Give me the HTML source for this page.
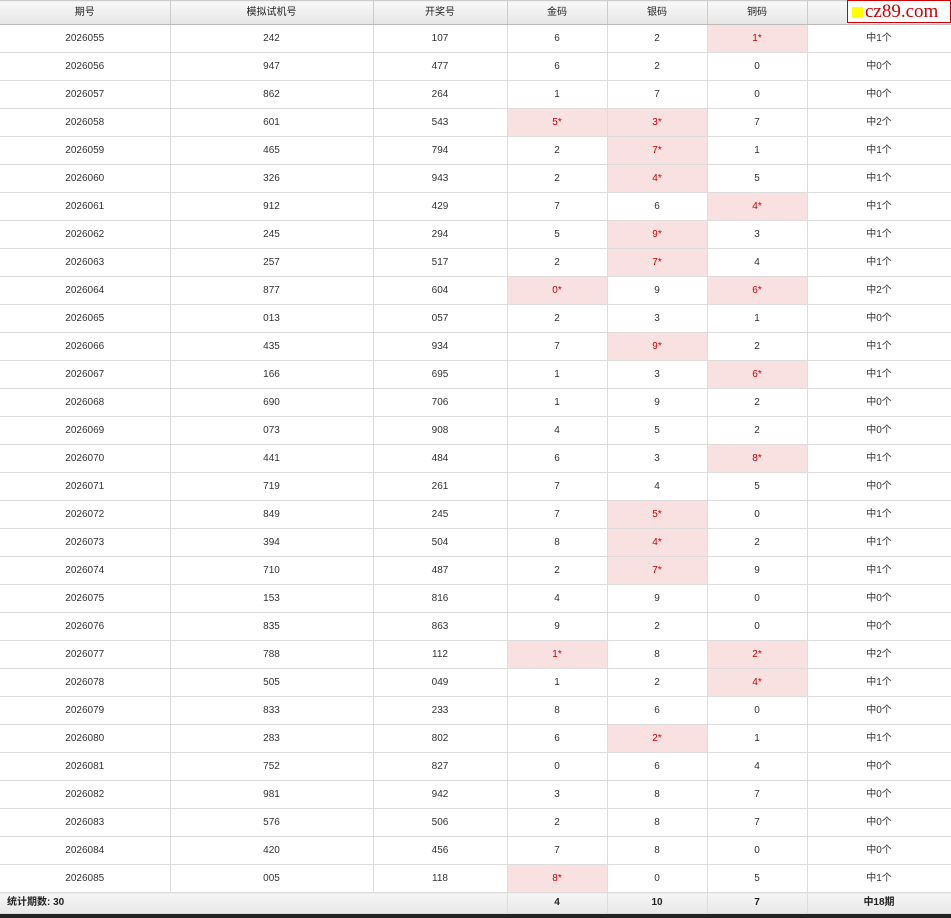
<!DOCTYPE html><html><head><meta charset="utf-8"><style>
body{margin:0;width:951px;height:918px;background:#fff;font-family:"Liberation Sans","Noto Sans CJK SC",sans-serif;font-size:10px;color:#333;position:relative;overflow:hidden}
table{border-collapse:collapse;table-layout:fixed;width:951px;position:absolute;left:0;top:0}
td{border:1px solid #ddd;text-align:center;height:27px;padding:0;line-height:12px;vertical-align:middle}
tr.h td{height:23px;background:linear-gradient(#f8f8f8,#e6e6e6);border-color:#ccc;border-bottom:1px solid #bbb;color:#222}
td.r{background:#f9e1e2;color:#c00}
tr.f td{height:20px;background:linear-gradient(#f5f5f5,#e8e8e8);font-weight:bold;color:#222}
td:first-child{border-left:none}
.bar{position:absolute;left:0;top:914px;width:951px;height:4px;background:#222}
.logo{position:absolute;left:847px;top:0;width:102px;height:21px;border:1px solid #c00;background:#fff;color:#c00;font-family:"Liberation Serif",serif;font-size:19px;line-height:21px}
.logo i{display:inline-block;width:11px;height:11px;background:#ff0;margin:0 2px 0 4px;vertical-align:-1px}
</style></head><body>
<table>
<colgroup><col style="width:170px"><col style="width:203px"><col style="width:134px"><col style="width:100px"><col style="width:100px"><col style="width:100px"><col style="width:144px"></colgroup>
<tr class="h"><td>期号</td><td>模拟试机号</td><td>开奖号</td><td>金码</td><td>银码</td><td>铜码</td><td>结果</td></tr>
<tr><td>2026055</td><td>242</td><td>107</td><td>6</td><td>2</td><td class="r">1*</td><td>中1个</td></tr>
<tr><td>2026056</td><td>947</td><td>477</td><td>6</td><td>2</td><td>0</td><td>中0个</td></tr>
<tr><td>2026057</td><td>862</td><td>264</td><td>1</td><td>7</td><td>0</td><td>中0个</td></tr>
<tr><td>2026058</td><td>601</td><td>543</td><td class="r">5*</td><td class="r">3*</td><td>7</td><td>中2个</td></tr>
<tr><td>2026059</td><td>465</td><td>794</td><td>2</td><td class="r">7*</td><td>1</td><td>中1个</td></tr>
<tr><td>2026060</td><td>326</td><td>943</td><td>2</td><td class="r">4*</td><td>5</td><td>中1个</td></tr>
<tr><td>2026061</td><td>912</td><td>429</td><td>7</td><td>6</td><td class="r">4*</td><td>中1个</td></tr>
<tr><td>2026062</td><td>245</td><td>294</td><td>5</td><td class="r">9*</td><td>3</td><td>中1个</td></tr>
<tr><td>2026063</td><td>257</td><td>517</td><td>2</td><td class="r">7*</td><td>4</td><td>中1个</td></tr>
<tr><td>2026064</td><td>877</td><td>604</td><td class="r">0*</td><td>9</td><td class="r">6*</td><td>中2个</td></tr>
<tr><td>2026065</td><td>013</td><td>057</td><td>2</td><td>3</td><td>1</td><td>中0个</td></tr>
<tr><td>2026066</td><td>435</td><td>934</td><td>7</td><td class="r">9*</td><td>2</td><td>中1个</td></tr>
<tr><td>2026067</td><td>166</td><td>695</td><td>1</td><td>3</td><td class="r">6*</td><td>中1个</td></tr>
<tr><td>2026068</td><td>690</td><td>706</td><td>1</td><td>9</td><td>2</td><td>中0个</td></tr>
<tr><td>2026069</td><td>073</td><td>908</td><td>4</td><td>5</td><td>2</td><td>中0个</td></tr>
<tr><td>2026070</td><td>441</td><td>484</td><td>6</td><td>3</td><td class="r">8*</td><td>中1个</td></tr>
<tr><td>2026071</td><td>719</td><td>261</td><td>7</td><td>4</td><td>5</td><td>中0个</td></tr>
<tr><td>2026072</td><td>849</td><td>245</td><td>7</td><td class="r">5*</td><td>0</td><td>中1个</td></tr>
<tr><td>2026073</td><td>394</td><td>504</td><td>8</td><td class="r">4*</td><td>2</td><td>中1个</td></tr>
<tr><td>2026074</td><td>710</td><td>487</td><td>2</td><td class="r">7*</td><td>9</td><td>中1个</td></tr>
<tr><td>2026075</td><td>153</td><td>816</td><td>4</td><td>9</td><td>0</td><td>中0个</td></tr>
<tr><td>2026076</td><td>835</td><td>863</td><td>9</td><td>2</td><td>0</td><td>中0个</td></tr>
<tr><td>2026077</td><td>788</td><td>112</td><td class="r">1*</td><td>8</td><td class="r">2*</td><td>中2个</td></tr>
<tr><td>2026078</td><td>505</td><td>049</td><td>1</td><td>2</td><td class="r">4*</td><td>中1个</td></tr>
<tr><td>2026079</td><td>833</td><td>233</td><td>8</td><td>6</td><td>0</td><td>中0个</td></tr>
<tr><td>2026080</td><td>283</td><td>802</td><td>6</td><td class="r">2*</td><td>1</td><td>中1个</td></tr>
<tr><td>2026081</td><td>752</td><td>827</td><td>0</td><td>6</td><td>4</td><td>中0个</td></tr>
<tr><td>2026082</td><td>981</td><td>942</td><td>3</td><td>8</td><td>7</td><td>中0个</td></tr>
<tr><td>2026083</td><td>576</td><td>506</td><td>2</td><td>8</td><td>7</td><td>中0个</td></tr>
<tr><td>2026084</td><td>420</td><td>456</td><td>7</td><td>8</td><td>0</td><td>中0个</td></tr>
<tr><td>2026085</td><td>005</td><td>118</td><td class="r">8*</td><td>0</td><td>5</td><td>中1个</td></tr>
<tr class="f"><td colspan="3" style="text-align:left;padding-left:7px">统计期数: 30</td><td>4</td><td>10</td><td>7</td><td>中18期</td></tr>
</table>
<div class="bar"></div>
<div class="logo"><i></i>cz89.com</div>
</body></html>
